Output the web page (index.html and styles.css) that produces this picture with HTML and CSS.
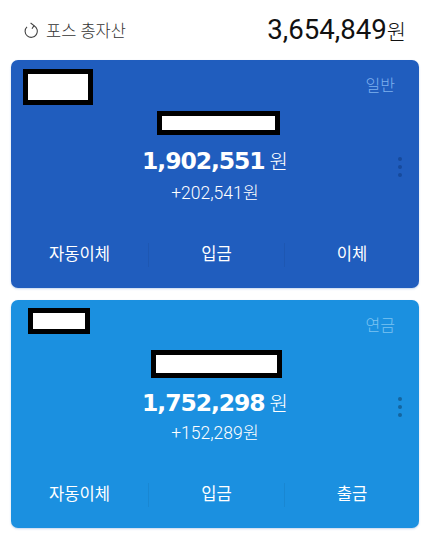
FILE: index.html
```html
<!DOCTYPE html>
<html lang="ko">
<head>
    <meta charset="UTF-8">
    <meta name="viewport" content="width=device-width, initial-scale=1.0">
    <title>포스 총자산</title>
    <link rel="stylesheet" href="styles.css">
</head>
<body>
    <div class="top">
        <div class="top-label">
            <svg class="refresh" width="14" height="16" viewBox="0 0 14 16" fill="none" stroke="#444" stroke-width="1.1">
                <path d="M3 4.8A6.1 6.1 0 1 0 10 3.8"/>
                <path d="M6.6 1L10 3.6L8 6.8"/>
            </svg>
            <span>포스 총자산</span>
        </div>
        <div class="top-total">3,654,849<span class="won">원</span></div>
    </div>

    <div class="card card-normal">
        <div class="card-head">
            <div class="mask mask-name"></div>
            <div class="card-type">일반</div>
        </div>
        <div class="mask mask-account"></div>
        <div class="amount">1,902,551<span class="won">원</span></div>
        <div class="profit">+202,541원</div>
        <div class="dots"><i></i><i></i><i></i></div>
        <div class="actions">
            <div class="action">자동이체</div>
            <div class="action">입금</div>
            <div class="action">이체</div>
        </div>
    </div>

    <div class="card card-pension">
        <div class="card-head">
            <div class="mask mask-name"></div>
            <div class="card-type">연금</div>
        </div>
        <div class="mask mask-account"></div>
        <div class="amount">1,752,298<span class="won">원</span></div>
        <div class="profit">+152,289원</div>
        <div class="dots"><i></i><i></i><i></i></div>
        <div class="actions">
            <div class="action">자동이체</div>
            <div class="action">입금</div>
            <div class="action">출금</div>
        </div>
    </div>
</body>
</html>
```

FILE: styles.css
```css
body {
    margin: 0;
    padding: 0 12px 0 11px;
    background-color: white;
    font-family: Roboto, "Noto Sans CJK KR", sans-serif;
}
.top {
    display: flex;
    justify-content: space-between;
    align-items: center;
    height: 60px;
    padding: 0 13px;
}
.top-label {
    display: flex;
    align-items: center;
    gap: 8px;
    font-size: 16.5px;
    font-weight: 300;
    color: #333;
}
.refresh {
    flex: none;
}
.top-total {
    margin-bottom: 2px;
    font-size: 27.6px;
    color: #111;
}
.top-total .won {
    font-size: 21px;
    font-weight: 300;
}
.card {
    position: relative;
    height: 228px;
    margin-bottom: 12px;
    border-radius: 7px;
    color: white;
    text-align: center;
    box-shadow: 0 1px 2px rgba(60,120,200,0.3);
}
.card-normal {
    background-color: #205dbe;
}
.card-pension {
    background-color: #1b90e0;
}
.card-head {
    display: flex;
    justify-content: space-between;
    align-items: flex-start;
    padding: 9px 24px 0 12px;
}
.card-type {
    margin-top: 3px;
    font-size: 16px;
    font-weight: 300;
    color: #7fb0ee;
}
.card-pension .card-type {
    margin-top: 4px;
    color: #7cc3f2;
}
.mask {
    box-sizing: border-box;
    background-color: white;
    border: 5px solid black;
}
.mask-name {
    width: 70px;
    height: 36px;
}
.mask-account {
    width: 123px;
    height: 24px;
    margin: 6px auto 0;
    transform: translateX(3px);
}
.card-pension .card-head {
    padding-top: 8px;
    padding-left: 17px;
}
.card-pension .mask-name {
    width: 62px;
    height: 26px;
}
.card-pension .mask-account {
    width: 131px;
    height: 28px;
    margin-top: 14px;
    transform: translateX(1px);
}
.amount {
    margin-top: 11px;
    font-family: "DejaVu Sans", sans-serif;
    font-size: 23.5px;
    font-weight: bold;
    letter-spacing: -1.1px;
    line-height: 30px;
}
.card-pension .amount {
    margin-top: 10px;
}
.amount .won {
    margin-left: 5px;
    font-family: Roboto, "Noto Sans CJK KR", sans-serif;
    font-size: 20px;
    font-weight: 300;
    letter-spacing: 0;
}
.profit {
    margin-top: 6px;
    font-size: 17.5px;
    font-weight: 300;
    line-height: 20px;
}
.card-pension .profit {
    margin-top: 4px;
}
.dots {
    position: absolute;
    top: 97px;
    right: 17px;
    display: flex;
    flex-direction: column;
    gap: 4px;
}
.dots i {
    width: 4px;
    height: 4px;
    border-radius: 50%;
    background-color: #164a9c;
}
.card-pension .dots i {
    background-color: #14659f;
}
.actions {
    position: absolute;
    left: 0;
    right: 0;
    bottom: 21px;
    display: grid;
    grid-template-columns: 137px 136px 1fr;
}
.action {
    font-size: 16.6px;
    line-height: 24px;
    border-left: 1px solid rgba(0,0,0,0.06);
}
.action:first-child {
    border-left: none;
}
```
